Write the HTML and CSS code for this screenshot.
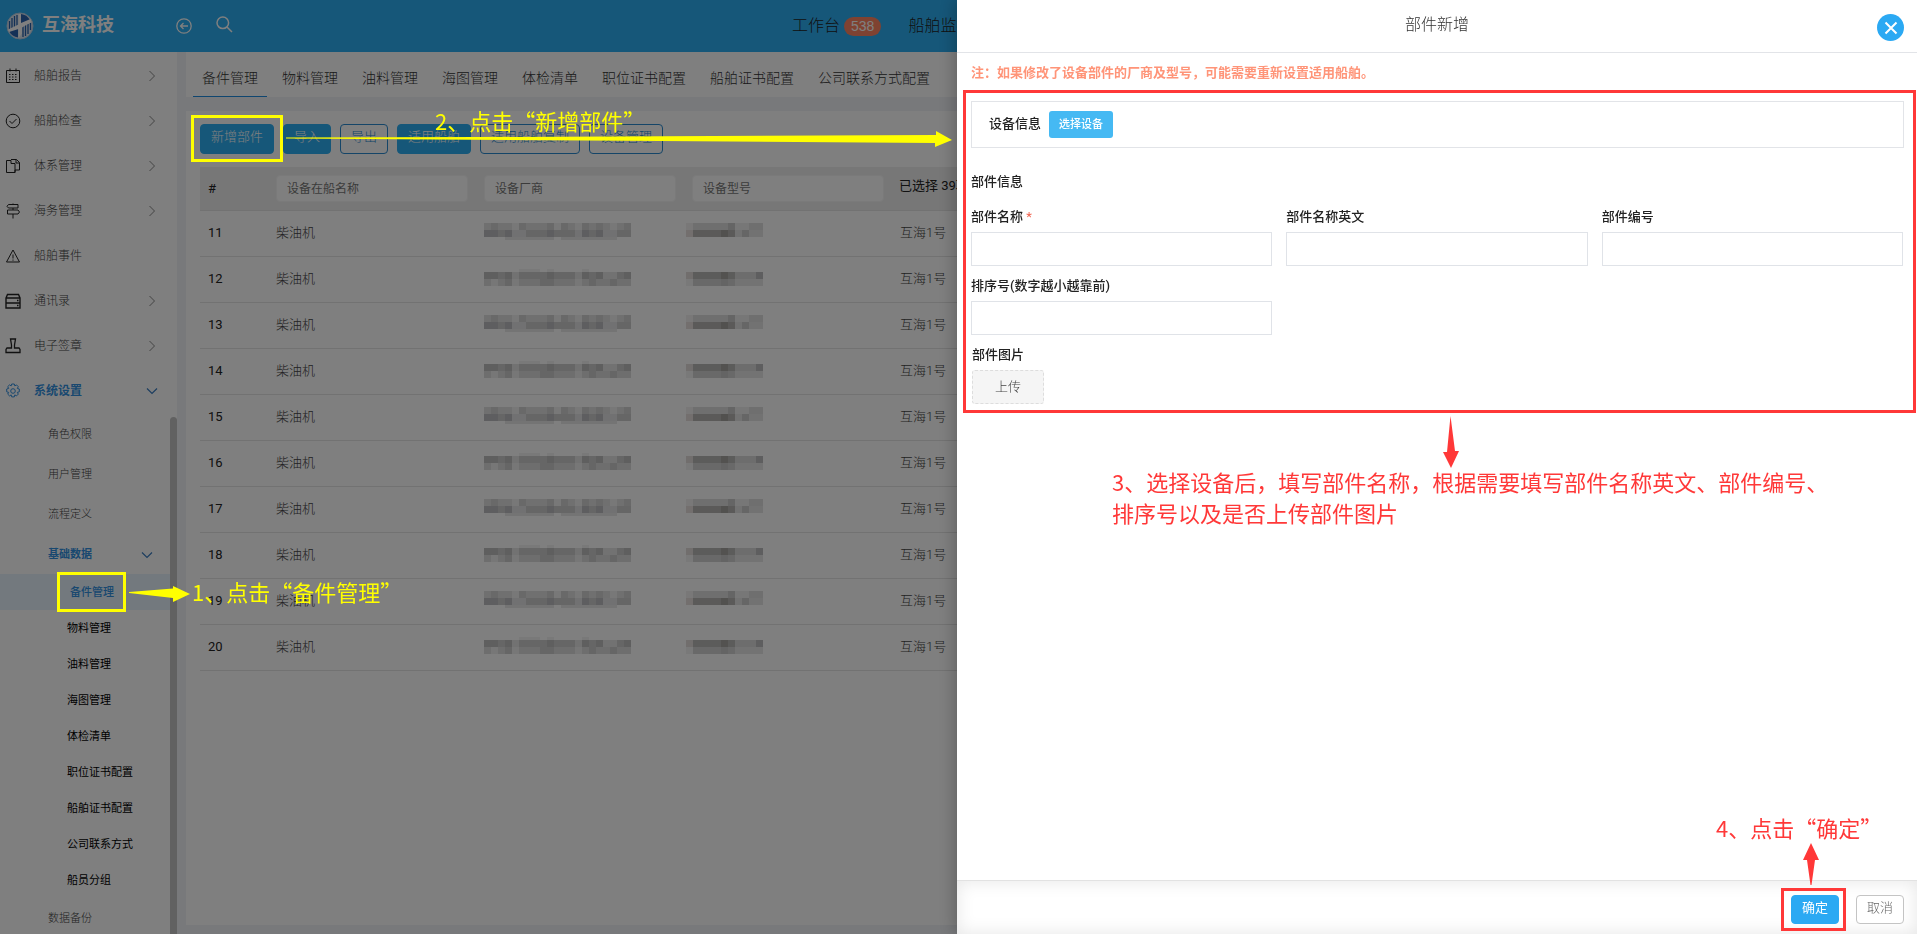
FILE: index.html
```html
<!DOCTYPE html>
<html lang="zh-CN">
<head>
<meta charset="utf-8">
<title>互海科技</title>
<link rel="stylesheet" href="styles.css">
</head>
<body>
<svg class="defs" width="0" height="0" aria-hidden="true">
  <symbol id="chev" viewBox="0 0 12 12"><path d="M3.500 1l5 5-5 5" fill="none" stroke="currentColor" stroke-width="1"/></symbol>
  <symbol id="chev-down" viewBox="0 0 12 12"><path d="M1 3.500l5 5 5-5" fill="none" stroke="currentColor" stroke-width="1.200"/></symbol>
  <symbol id="mos-a" viewBox="0 0 147 20">
    <path d="M0 0h147v7H0z" fill="#e0e0e0"/><path d="M0 7h147v7H0z" fill="#cdcdcd"/>
    <path d="M21 15.500h28M49 15.500h21M77 15.500h56" stroke="#e8e8e8" stroke-width="3"/>
    <path d="M7 3.500h7M35 3.500h7M63 3.500h7M77 3.500h7M98 3.500h7M112 3.500h7M140 3.500h7" stroke="#d2d2d2" stroke-width="7"/>
    <path d="M28 3.500h7M70 3.500h7M91 3.500h7M126 3.500h7" stroke="#f0f0f0" stroke-width="7"/>
    <path d="M0 10.500h14M21 10.500h7M63 10.500h7M98 10.500h7M112 10.500h7" stroke="#bcbcc0" stroke-width="7"/>
    <path d="M28 10.500h14M91 10.500h7M119 10.500h14" stroke="#e2e2e4" stroke-width="7"/>
  </symbol>
  <symbol id="mos-b" viewBox="0 0 147 20">
    <path d="M0 3h147v7H0z" fill="#cdcdcd"/><path d="M0 10h147v7H0z" fill="#dcdcdc"/>
    <path d="M35 1.500h21M63 1.500h7M98 1.500h7" stroke="#f2f2f2" stroke-width="3"/>
    <path d="M0 6.500h14M21 6.500h7M63 6.500h7M98 6.500h7M112 6.500h7M140 6.500h7" stroke="#bebebe" stroke-width="7"/>
    <path d="M28 6.500h7M91 6.500h7M119 6.500h14" stroke="#e4e4e4" stroke-width="7"/>
    <path d="M21 13.500h7M56 13.500h14M105 13.500h7M126 13.500h7" stroke="#cccccc" stroke-width="7"/>
    <path d="M7 13.500h7M28 13.500h7M91 13.500h7" stroke="#eeeeee" stroke-width="7"/>
  </symbol>
  <symbol id="mos-c" viewBox="0 0 77 20">
    <path d="M0 0h77v7H0z" fill="#dedede"/><path d="M0 0h7v7H0z" fill="#f2f0f0"/><path d="M49 0h14v7H49z" fill="#eeeeee"/>
    <path d="M7 7h42v7H7z" fill="#b6b4b2"/><path d="M35 7h7v7H35z" fill="#a4a29e"/><path d="M49 7h28v7H49z" fill="#e4e4e4"/><path d="M56 7h7v7h-7z" fill="#cccccc"/><path d="M0 7h7v7H0z" fill="#e6dfdd"/><path d="M42 0h7v7h-7z" fill="#cacaca"/>
  </symbol>
  <symbol id="mos-d" viewBox="0 0 77 20">
    <path d="M0 3h7v7H0z" fill="#e2dcda"/><path d="M7 3h42v7H7z" fill="#b8b8b6"/><path d="M35 3h7v7h-7z" fill="#a6a4a0"/><path d="M49 3h21v7H49z" fill="#dadada"/><path d="M70 3h7v7h-7z" fill="#bcbcbe"/>
    <path d="M7 10h42v7H7z" fill="#d2d2d2"/><path d="M49 10h28v7H49z" fill="#e6e6e6"/><path d="M35 10h7v7h-7z" fill="#c8c8c8"/><path d="M0 10h7v7H0z" fill="#f2f2f2"/>
  </symbol>
</svg>

<header class="topbar">
  <svg class="logo" viewBox="0 0 28 28"><circle cx="14" cy="14" r="13" fill="#dfe8f1" stroke="#b9cfe6"/><path d="M15 2a12 12 0 0 1 9 6l-9 4zM3 19l9-3v9.500C8 25 5 23 3 19z" fill="#2a62ae"/><path d="M3.500 9v9M6 6v11M8.500 4v12M11 3v12M17 14v11M19.500 13v11M22 12v10M24.500 11v7" stroke="#2460ac" stroke-width="1.300"/><path d="M12.500 2H15v9l9.500-4 1 3L16 15.500v6l-3.500 4.500v-9L3 20l-1-2.500 10.500-5z" fill="#fff"/></svg>
  <strong class="brand">互海科技</strong>
  <button class="icon-btn back" aria-label="返回"><svg width="16" height="16" viewBox="0 0 16 16" fill="none" stroke="currentColor" stroke-width="1.300"><circle cx="8" cy="8" r="7.200"/><path d="M12 8H4.500M7.500 5l-3 3 3 3"/></svg></button>
  <button class="icon-btn search" aria-label="搜索"><svg width="17" height="17" viewBox="0 0 17 17" fill="none" stroke="currentColor" stroke-width="1.500"><circle cx="6.800" cy="6.800" r="5.800"/><path d="M11 11l5 5"/></svg></button>
  <nav class="topnav"><a href="#">工作台<span class="badge">538</span></a><a href="#">船舶监控</a></nav>
</header>

<div class="body">
  <nav class="side">
    <a class="item" href="#"><svg class="ic" viewBox="0 0 16 16"><path d="M1.500 2.500h13v12h-13zM5 .5v3M11 .5v3"/><path d="M4 6.500h2M7 6.500h2M10 6.500h2M4 9h2M7 9h2M10 9h2M4 11.500h2M7 11.500h2M10 11.500h2" stroke-dasharray="1.500 9"/></svg>船舶报告<svg class="ch"><use href="#chev"/></svg></a>
    <a class="item" href="#"><svg class="ic" viewBox="0 0 16 16"><circle cx="8" cy="8" r="6.800"/><path d="M4.500 8l2.500 2.500L11.500 6"/></svg>船舶检查<svg class="ch"><use href="#chev"/></svg></a>
    <a class="item" href="#"><svg class="ic" viewBox="0 0 16 16"><path d="M6 2.500H1.500v12H10V12M6 1.500h5.500l3 3V12H10M6 2.500v3h4v9M11 1.500v3.500h3.500"/></svg>体系管理<svg class="ch"><use href="#chev"/></svg></a>
    <a class="item" href="#"><svg class="ic" viewBox="0 0 16 16"><path d="M3.500 1.500h9.500v3.500H3.500l-1.500-1.700zM13 7H2.500v4H13l1.500-2zM8 .5v1M8 5v2M8 11v4.500"/></svg>海务管理<svg class="ch"><use href="#chev"/></svg></a>
    <a class="item" href="#"><svg class="ic" viewBox="0 0 16 16"><path d="M8 2l6.500 12h-13zM8 6.500v4M8 11.500v1.200"/></svg>船舶事件</a>
    <a class="item" href="#"><svg class="ic" viewBox="0 0 16 16"><path d="M1 5l1.500-3.500h11L15 5v10H1zM1 5h14M1 10h14M12 7.500h1.500M12 12.500h1.500" stroke-width="1.400"/></svg>通讯录<svg class="ch"><use href="#chev"/></svg></a>
    <a class="item" href="#"><svg class="ic" viewBox="0 0 16 16"><path d="M5.500 1h5L9.500 7v3H14l1 1.500v3H1v-3L2 10h4.500V7z" stroke-width="1.300"/></svg>电子签章<svg class="ch"><use href="#chev"/></svg></a>
    <a class="item on" href="#"><svg class="ic" viewBox="0 0 16 16"><circle cx="8" cy="8" r="2.300"/><path d="M6.700 1h2.600l.5 1.900 1.700-1 1.800 1.800-1 1.700 2 .6v2.800l-2 .6 1 1.700-1.800 1.800-1.700-1-.5 2H6.700l-.5-2-1.700 1-1.800-1.800 1-1.700-2-.6V6l2-.6-1-1.700 1.800-1.800 1.700 1z"/></svg>系统设置<svg class="ch"><use href="#chev-down"/></svg></a>
    <a class="item sub" href="#">角色权限</a>
    <a class="item sub" href="#">用户管理</a>
    <a class="item sub" href="#">流程定义</a>
    <a class="item sub on" href="#">基础数据<svg class="ch"><use href="#chev-down"/></svg></a>
    <a class="item leaf on" href="#">备件管理</a>
    <a class="item leaf" href="#">物料管理</a>
    <a class="item leaf" href="#">油料管理</a>
    <a class="item leaf" href="#">海图管理</a>
    <a class="item leaf" href="#">体检清单</a>
    <a class="item leaf" href="#">职位证书配置</a>
    <a class="item leaf" href="#">船舶证书配置</a>
    <a class="item leaf" href="#">公司联系方式</a>
    <a class="item leaf" href="#">船员分组</a>
    <a class="item sub" href="#">数据备份</a>
    <span class="thumb"></span>
  </nav>

  <main class="main">
    <nav class="tabs">
      <a class="on" href="#">备件管理</a><a href="#">物料管理</a><a href="#">油料管理</a><a href="#">海图管理</a><a href="#">体检清单</a><a href="#">职位证书配置</a><a href="#">船舶证书配置</a><a href="#">公司联系方式配置</a>
    </nav>
    <section class="panel">
      <div class="tools">
        <button class="btn solid">新增部件</button><button class="btn solid">导入</button><button class="btn">导出</button><button class="btn solid">适用船舶</button><button class="btn">适用船舶复制</button><button class="btn">设备管理</button>
      </div>
      <table class="grid">
        <colgroup><col class="c1"><col class="c2"><col class="c2"><col class="c2"><col></colgroup>
        <thead><tr><th>#</th><th><input aria-label="设备在船名称" placeholder="设备在船名称"></th><th><input aria-label="设备厂商" placeholder="设备厂商"></th><th><input aria-label="设备型号" placeholder="设备型号"></th><th class="picked">已选择 39项</th></tr></thead>
        <tbody>
          <tr><td>11</td><td>柴油机</td><td><svg class="m1"><use href="#mos-a"/></svg></td><td class="model"><svg class="m2"><use href="#mos-c"/></svg></td><td>互海1号</td></tr>
          <tr><td>12</td><td>柴油机</td><td><svg class="m1"><use href="#mos-b"/></svg></td><td class="model"><svg class="m2"><use href="#mos-d"/></svg></td><td>互海1号</td></tr>
          <tr><td>13</td><td>柴油机</td><td><svg class="m1"><use href="#mos-a"/></svg></td><td class="model"><svg class="m2"><use href="#mos-c"/></svg></td><td>互海1号</td></tr>
          <tr><td>14</td><td>柴油机</td><td><svg class="m1"><use href="#mos-b"/></svg></td><td class="model"><svg class="m2"><use href="#mos-d"/></svg></td><td>互海1号</td></tr>
          <tr><td>15</td><td>柴油机</td><td><svg class="m1"><use href="#mos-a"/></svg></td><td class="model"><svg class="m2"><use href="#mos-c"/></svg></td><td>互海1号</td></tr>
          <tr><td>16</td><td>柴油机</td><td><svg class="m1"><use href="#mos-b"/></svg></td><td class="model"><svg class="m2"><use href="#mos-d"/></svg></td><td>互海1号</td></tr>
          <tr><td>17</td><td>柴油机</td><td><svg class="m1"><use href="#mos-a"/></svg></td><td class="model"><svg class="m2"><use href="#mos-c"/></svg></td><td>互海1号</td></tr>
          <tr><td>18</td><td>柴油机</td><td><svg class="m1"><use href="#mos-b"/></svg></td><td class="model"><svg class="m2"><use href="#mos-d"/></svg></td><td>互海1号</td></tr>
          <tr><td>19</td><td>柴油机</td><td><svg class="m1"><use href="#mos-a"/></svg></td><td class="model"><svg class="m2"><use href="#mos-c"/></svg></td><td>互海1号</td></tr>
          <tr><td>20</td><td>柴油机</td><td><svg class="m1"><use href="#mos-b"/></svg></td><td class="model"><svg class="m2"><use href="#mos-d"/></svg></td><td>互海1号</td></tr>
        </tbody>
      </table>
    </section>
  </main>
</div>

<div class="mask"></div>

<aside class="drawer">
  <header class="d-head"><h2>部件新增</h2><button class="close" aria-label="关闭"><svg width="14" height="14" viewBox="0 0 14 14"><path d="M1.500 1.500l11 11M12.500 1.500l-11 11" stroke="#fff" stroke-width="2"/></svg></button></header>
  <div class="d-body">
    <p class="note">注：如果修改了设备部件的厂商及型号，可能需要重新设置适用船舶。</p>
    <div class="device"><span>设备信息</span><button class="pick">选择设备</button></div>
    <h3>部件信息</h3>
    <form class="form">
      <div class="field"><label for="f1">部件名称 <i>*</i></label><input id="f1"></div>
      <div class="field"><label for="f2">部件名称英文</label><input id="f2"></div>
      <div class="field"><label for="f3">部件编号</label><input id="f3"></div>
      <div class="field"><label for="f4">排序号(数字越小越靠前)</label><input id="f4"></div>
      <div class="field pic"><span id="pl">部件图片</span><button type="button" class="upload" aria-describedby="pl">上传</button></div>
    </form>
  </div>
  <footer class="d-foot"><button class="btn ok">确定</button><button class="btn cancel">取消</button></footer>
</aside>

<div class="marks">
  <svg class="arrows" width="1917" height="934" viewBox="0 0 1917 934">
    <g fill="none" stroke="#ffff00" stroke-width="3"><path d="M58.500 573.500h66v37h-66zM192.500 116.500h89v44h-89z"/></g>
    <g fill="#ffff00"><path d="M129 592l44-3.500V586l17 8-17 8v-4l-44-5z"/><path d="M286 137.500L480 137l456-2v-4l16 9-17 7v-4l-275-2-374-2.500z"/></g>
    <path d="M964.500 91.500h950v320h-950z" fill="none" stroke="#ff3838" stroke-width="3"/>
    <path d="M1782.500 889.500h62v40h-62z" fill="none" stroke="#ff3838" stroke-width="3"/>
    <g fill="#ff3838"><path d="M1450.500 416l4.500 35h4l-8 17-8-16h4z"/><path d="M1811 843l8 17h-4l-3.500 25h-1L1807 860h-4z"/></g>
  </svg>
  <p class="say s1">1、点击“备件管理”</p>
  <p class="say s2">2、点击“新增部件”</p>
  <p class="say red s3">3、选择设备后，填写部件名称，根据需要填写部件名称英文、部件编号、<br>排序号以及是否上传部件图片</p>
  <p class="say red s4">4、点击“确定”</p>
</div>
</body>
</html>
```
FILE: styles.css
```css
* { box-sizing: border-box; }
body {
  margin: 0; height: 100vh; overflow: hidden;
  display: flex; flex-direction: column;
  background: #f0f2f7; color: #333;
  font: 300 13px/20px Roboto, "Noto Sans CJK SC", sans-serif;
}
a { color: inherit; text-decoration: none; }
button, input { font: inherit; color: inherit; }
button { border: 0; padding: 0; background: none; }
h2, h3, p { margin: 0; }
.defs { position: absolute; }

.topbar { height: 52px; flex: none; display: flex; align-items: center; background: #2caef2; color: #fff; padding-left: 6px; }
.logo { width: 28px; height: 28px; }
.brand { font-size: 18px; margin-left: 8px; width: 134px; padding-bottom: 2px; font-weight: 700; }
.icon-btn { display: flex; margin-right: 24px; }
.search { padding-bottom: 3px; }
.topnav { display: flex; margin-left: 535px; gap: 27px; color: #222; font-size: 16px; font-weight: 300; white-space: nowrap; }
.topnav a { display: flex; align-items: center; gap: 4px; }
.badge { background: #ff8462; color: #fff; border-radius: 10px; font: 500 14px/19px "Liberation Sans", sans-serif; padding: 0 7px; }

.body { flex: 1; display: flex; min-height: 0; }
.side { width: 177px; flex: none; background: #fff; padding-top: 2px; overflow: hidden; position: relative; }
.item { height: 45px; display: flex; align-items: center; padding: 0 19px 1px 5px; font-size: 12px; color: #444; }
.ic { width: 16px; height: 16px; margin-right: 13px; fill: none; stroke: #222; stroke-width: 1; }
.ch { width: 12px; height: 12px; margin-left: auto; color: #888; }
.item.on { color: #3290e0; font-weight: 700; }
.item.on .ic { stroke: #3290e0; }
.item.on .ch { color: #3a7cc0; }
.item.sub { height: 40px; padding: 2px 24px 0 48px; font-size: 11px; }
.item.leaf { height: 36px; padding: 2px 0 0 67px; font-size: 11px; color: #000; font-weight: 400; }
.item.leaf.on { padding-left: 70px; background: #e6f3fc; color: #3290e0; font-weight: 500; }
.thumb { position: absolute; right: 0; top: 365px; bottom: 0; width: 7px; background: #c2c2c2; border-radius: 4px 4px 0 0; }

.main { flex: 1; min-width: 0; padding: 0 14px 9px 9px; display: flex; flex-direction: column; gap: 14px; }
.tabs { height: 45px; flex: none; background: #fff; display: flex; padding-left: 7px; gap: 6px; }
.tabs a { padding: 9px 9px 0; line-height: 35px; font-size: 14px; color: #333; border-bottom: 1px solid transparent; white-space: nowrap; }
.tabs a.on { border-color: #1e8ce0; }
.panel { flex: 1; background: #fff; padding: 13px 14px; }
.tools { display: flex; gap: 9px; margin-bottom: 13px; }
.btn { height: 30px; padding: 0 10px 4px; border: 1px solid #2a8ad0; border-radius: 4px; color: #2a8ad0; font-size: 13px; }
.btn.solid { background: #2caef2; border-color: #2caef2; color: #fff; }

.grid { width: 100%; table-layout: fixed; border-collapse: separate; border-spacing: 0; }
.c1 { width: 68px; }
.c2 { width: 208px; }
.grid th, .grid td { padding: 0 8px; text-align: left; border-bottom: 1px solid #e4e4e4; white-space: nowrap; }
.grid th { height: 44px; background: #eee; font-weight: 400; font-size: 13px; color: #222; }
.grid th.picked { padding: 0 7px 6px; }
.grid th input { display: block; width: 100%; height: 27px; border: 1px solid #f4f4f4; border-radius: 4px; background: #fff; padding: 0 10px; font-size: 12px; }
.grid th input::placeholder { color: #777; }
.grid td { height: 46px; font-size: 13px; padding-bottom: 2px; color: #444; }
.grid td:first-child { font-weight: 400; color: #222; }
.grid td.model { padding-left: 2px; }
.m1, .m2 { display: block; height: 20px; width: 147px; }
.m2 { width: 77px; }

.mask { position: fixed; inset: 0; background: rgba(0, 0, 0, .5); }

.drawer { position: fixed; top: 0; right: 0; bottom: 0; width: 960px; max-width: 100%; background: #fff; display: flex; flex-direction: column; box-shadow: -2px 0 16px rgba(0, 0, 0, .25); }
.d-head { height: 53px; flex: none; border-bottom: 1px solid #e2e4e8; display: flex; align-items: center; justify-content: center; position: relative; }
.d-head h2 { font-size: 16px; font-weight: 300; color: #333; padding-bottom: 3px; }
.close { position: absolute; right: 13px; top: 14px; width: 27px; height: 27px; border-radius: 50%; background: #2ba9f3; display: flex; align-items: center; justify-content: center; }
.d-body { flex: 1; padding: 10px 13px 0 14px; }
.note { color: #ff9478; font-weight: 700; margin-bottom: 18px; }
.device { border: 1px solid #e2e4e8; height: 47px; display: flex; align-items: center; padding-left: 17px; gap: 8px; }
.device span, h3, .field { font-size: 13px; font-weight: 500; color: #222; }
.device span { padding-bottom: 2px; }
.pick { background: #45b9f3; color: #fff; font-size: 11px; font-weight: 500; height: 27px; padding: 0 10px; border-radius: 3px; }
h3 { margin: 24px 0 15px; }
.form { display: grid; grid-template-columns: repeat(3, 1fr); gap: 10px 14px; padding-right: 1px; }
.field { display: flex; flex-direction: column; gap: 5px; }
.field i { color: #f0604c; font-style: normal; font-weight: 400; }
.field input { width: 100%; height: 34px; border: 1px solid #e0e3e8; padding: 0 10px; background: #fff; }
.pic { grid-column: 1; padding-left: 1px; align-items: flex-start; }
.upload { width: 72px; height: 34px; background: #f5f5f5; border: 1px dashed #ddd; border-radius: 3px; color: #444; font-weight: 300; }
.d-foot { height: 54px; flex: none; border-top: 1px solid #e2e2e2; display: flex; justify-content: flex-end; gap: 17px; padding: 14px 13px 0; box-shadow: inset 0 0 18px rgba(0, 0, 0, .1); }
.d-foot .btn { height: 29px; }
.d-foot .ok { background: #2ba9f3; border-color: #2ba9f3; color: #fff; font-weight: 400; }
.d-foot .cancel { background: #fff; border-color: #c4c4c4; color: #666; }

.marks { position: absolute; left: 0; top: 0; pointer-events: none; }
.arrows { display: block; }
.say { position: absolute; white-space: nowrap; font: 400 22px/31px "Noto Sans CJK SC", sans-serif; color: #ffff00; }
.say.red { color: #ff3838; }
.s1 { left: 192px; top: 576px; }
.s2 { left: 435px; top: 105px; }
.s3 { left: 1112px; top: 466px; }
.s4 { left: 1716px; top: 812px; }
```
